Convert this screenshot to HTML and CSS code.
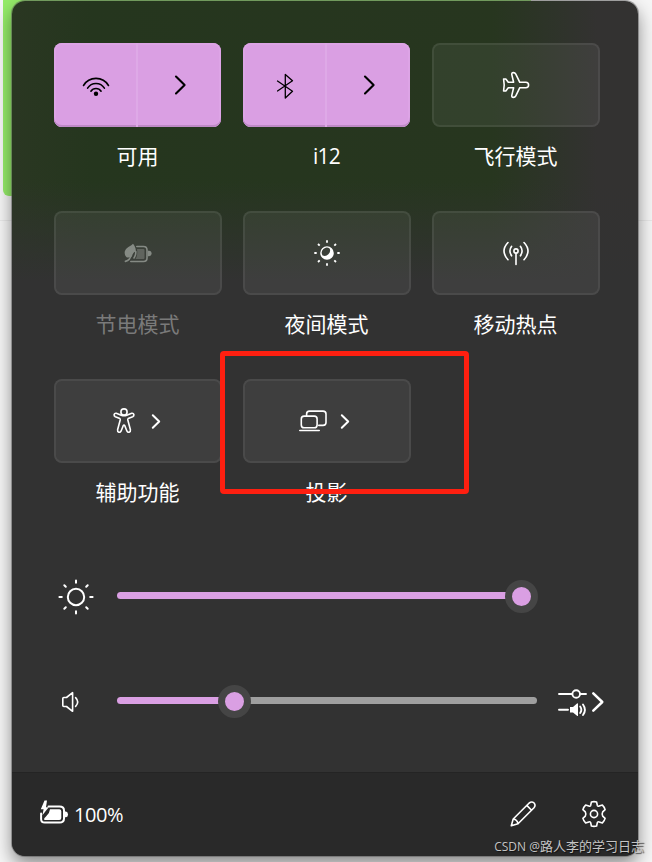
FILE: index.html
```
<!DOCTYPE html>
<html lang="zh-CN">
  <head>
    <meta charset="UTF-8" />
    <meta name="viewport" content="width=device-width, initial-scale=1.0" />
    <title>快速设置</title>
    <link rel="stylesheet" href="styles.css">
  </head>

  <body>
    <!-- 面板后面的聊天窗口 -->
    <div class="bubble"></div>
    <div class="divider"></div>

    <div class="panel">
      <div class="tiles">
        <div class="item">
          <div class="tile on">
            <div class="half">
              <svg class="icon" viewBox="0 0 28 28">
                <path d="M1.5 14.5A14.5 14.5 0 0 1 26.5 14.5M5.6 17.2A9.8 9.8 0 0 1 22.4 17.2M8.9 20.2A6.1 6.1 0 0 1 19.1 20.2" />
                <circle class="fill" cx="14" cy="22.8" r="2.2" />
              </svg>
            </div>
            <div class="half">
              <svg class="icon bold" viewBox="0 0 28 28"><path d="M10 5.5L18.6 14L10 22.5" /></svg>
            </div>
          </div>
          <div class="label">可用</div>
        </div>
        <div class="item">
          <div class="tile on">
            <div class="half">
              <svg class="icon thin" viewBox="0 0 28 28">
                <path d="M6.5 10L21.5 20.3L14.3 27V3.4L21.5 9.8L6.5 20" />
              </svg>
            </div>
            <div class="half">
              <svg class="icon bold" viewBox="0 0 28 28"><path d="M10 5.5L18.6 14L10 22.5" /></svg>
            </div>
          </div>
          <div class="label latin">i12</div>
        </div>
        <div class="item">
          <div class="tile">
            <svg class="icon" viewBox="0 0 28 28">
              <path d="M1.6 8H3.8L6.3 11.3H11.6L9.8 3.6Q9.6 1.6 11.4 1.6Q13 1.6 13.8 3.2L17.8 11.3H23.8Q26.6 11.4 26.6 14Q26.6 16.6 23.8 16.7H17.8L13.8 24.8Q13 26.4 11.4 26.4Q9.6 26.4 9.8 24.4L11.6 16.7H6.3L3.8 20H1.6L2.2 14Z" />
            </svg>
          </div>
          <div class="label">飞行模式</div>
        </div>

        <div class="item disabled">
          <div class="tile">
            <svg class="icon" viewBox="0 0 28 28">
              <path class="fill" d="M9 4.8C10.5 6.5 12.2 9.5 11.8 12.6C9.5 13.2 8.8 15 7.8 17.5C5.5 18.5 3.3 18.8 2.6 18.2C-0.3 15.5 0.2 11.5 2.8 9.2C4.8 7.5 7.5 6.8 9 4.8Z" />
              <path d="M7.6 12.5C7.4 17 5.6 21.5 1.4 22.4M12.8 7.5H19.5Q23 7.5 23 11V19Q23 22.5 19.5 22.5H6.8M11.8 12.5Q12 16 10 19" />
              <path class="fill dim" d="M13 10H19.5Q20.5 10 20.5 11V19Q20.5 20 19.5 20H11.5Q14 16 13 10Z" />
              <path class="fill" d="M23.8 11.8H25Q27.6 12 27.6 14.6Q27.6 17 25 17.2H23.8Z" />
            </svg>
          </div>
          <div class="label">节电模式</div>
        </div>
        <div class="item">
          <div class="tile">
            <svg class="icon" viewBox="0 0 28 28">
              <path class="fill" fill-rule="evenodd" d="M14 7.2A6.8 6.8 0 1 1 14 20.8A6.8 6.8 0 1 1 14 7.2ZM16.8 9.7A5 5 0 0 0 9.6 16.4A5.4 5.4 0 0 0 16.8 9.7Z" />
              <path class="rays" d="M14 1.3V3.7M14 24.3V26.7M1.3 14H3.7M24.3 14H26.7M5 5L6.7 6.7M21.3 21.3L23 23M5 23L6.7 21.3M21.3 6.7L23 5" />
            </svg>
          </div>
          <div class="label">夜间模式</div>
        </div>
        <div class="item">
          <div class="tile">
            <svg class="icon" viewBox="0 0 28 28">
              <circle cx="14" cy="12" r="2.1" />
              <path d="M14 14.2V25.4M9.6 7.3Q6.2 12 9.6 16.8M18.4 7.3Q21.8 12 18.4 16.8M6 3.5Q-2 12 6 20.7M22 3.5Q30 12 22 20.7" />
            </svg>
          </div>
          <div class="label">移动热点</div>
        </div>

        <div class="item">
          <div class="tile more">
            <svg class="icon" viewBox="0 0 28 28">
              <circle cx="14" cy="5" r="3.1" />
              <path d="M11.2 8.2L6.3 6.3Q4.6 6 4.1 7.4Q3.8 9 5.3 9.7L9.8 11.5Q10.4 12 10.2 13L7.6 22.8Q7.3 24.7 8.8 25.2Q10.3 25.6 11 24.2L13.2 18.7Q14 17.2 14.8 18.7L17 24.2Q17.7 25.6 19.2 25.2Q20.7 24.7 20.4 22.8L17.8 13Q17.6 12 18.2 11.5L22.7 9.7Q24.2 9 23.9 7.4Q23.4 6 21.7 6.3L16.8 8.2Q14 9.2 11.2 8.2Z" />
            </svg>
            <svg class="arrow" viewBox="0 0 20 28"><path d="M6.8 8.2L13.2 14.5L6.8 20.8" /></svg>
          </div>
          <div class="label">辅助功能</div>
        </div>
        <div class="item">
          <div class="tile more">
            <svg class="icon" viewBox="0 0 28 28">
              <path d="M7.6 8.5V7Q7.6 4.1 10.5 4.1H24Q27 4.1 27 7V15.5Q27 18.4 24 18.4H19.8" />
              <rect x="2.3" y="9.1" width="15.8" height="11.6" rx="2.8" />
              <path d="M0.8 23.5H20.2" />
            </svg>
            <svg class="arrow" viewBox="0 0 20 28"><path d="M6.8 8.2L13.2 14.5L6.8 20.8" /></svg>
          </div>
          <div class="label">投影</div>
          <!-- 红色标注框 -->
          <div class="mark"></div>
        </div>
      </div>

      <div class="slider">
        <svg class="sun" viewBox="0 0 38 38">
          <circle cx="19" cy="19" r="8.2" />
          <path d="M19 2.4V4.8M19 33.2V35.6M2.4 19H4.8M33.2 19H35.6M7.3 7.3L8.8 8.8M29.2 29.2L30.7 30.7M7.3 30.7L8.8 29.2M29.2 8.8L30.7 7.3" />
        </svg>
        <div class="track">
          <div class="value" style="width: 389px"></div>
          <div class="thumb" style="left: 404px"></div>
        </div>
      </div>
      <div class="slider">
        <svg class="speaker" viewBox="0 0 28 28">
          <path d="M6.8 9.5H9.5L15.6 4.7V23.3L9.5 18.5H6.8Q5.8 18.5 5.8 17.5V10.5Q5.8 9.5 6.8 9.5ZM18.6 9.6Q22.8 14 18.6 18.4" />
        </svg>
        <div class="track">
          <div class="value" style="width: 102px"></div>
          <div class="rest" style="left: 132px"></div>
          <div class="thumb" style="left: 117px"></div>
        </div>
        <svg class="mixer" viewBox="0 0 50 32">
          <path d="M2 8H15M23 8H29M2 23.8H11" />
          <circle cx="19.2" cy="8" r="3.8" />
          <path class="fill" d="M13 21H16L20.3 17.2Q21 17 21 18V29.5Q21 30.4 20.3 30L16 26.5H13Z" />
          <path d="M23.2 20.5Q25.5 23.8 23.2 27M26 18.5Q29.8 23.8 26 29" />
          <path class="wide" d="M36.3 7.3L45.3 16L36.3 24.7" />
        </svg>
      </div>

      <div class="footer">
        <svg class="battery" viewBox="0 0 30 28">
          <path d="M9.5 7.5H20.5Q25 7.5 25 11.5V19.5Q25 23.6 20.5 23.6H5.8Q2.1 23.6 2.1 20V14.5" />
          <path class="fill" d="M11 10.2H20.3Q22.3 10.2 22.3 12.2V19Q22.3 21 20.3 21H6Q5 21 5 20Q5.5 18.5 7 17.5Q10.8 14 11 10.2Z" />
          <path class="fill" d="M5.5 1.5L1.8 10.2H4.6L3.4 16.2L9.7 8.2H7L8 1.5Z" />
          <path class="fill" d="M25.5 12.5H27Q29 13 29 15.5Q29 18 27 18.3H25.5Z" />
        </svg>
        <span class="percent">100%</span>
        <svg class="icon edit" viewBox="0 0 28 28">
          <path d="M2.3 25.8L4.2 19L20.2 3Q22.8 1 25.1 3Q27 5.3 25 7.8L9 23.8ZM17.8 5.4L22.6 10.2M4.2 19Q8.3 19.5 9 23.8" />
        </svg>
        <svg class="icon" viewBox="0 0 28 28">
          <circle cx="14" cy="14" r="3.6" />
          <path d="M11.4 2Q14 1.3 16.6 2L17.3 5.2Q17.7 6.6 19.2 6.1L22.4 5.1Q24.4 7 25.1 9.6L22.7 11.9Q21.6 14 22.7 16.1L25.1 18.4Q24.4 21 22.4 22.9L19.2 21.9Q17.7 21.4 17.3 22.8L16.6 26Q14 26.7 11.4 26L10.7 22.8Q10.3 21.4 8.8 21.9L5.6 22.9Q3.6 21 2.9 18.4L5.3 16.1Q6.4 14 5.3 11.9L2.9 9.6Q3.6 7 5.6 5.1L8.8 6.1Q10.3 6.6 10.7 5.2Z" />
        </svg>
      </div>
    </div>

    <div class="watermark"><span>CSDN @</span>路人李的学习日志</div>
  </body>
</html>
```

FILE: styles.css
```
* {
  margin: 0;
  padding: 0;
  box-sizing: border-box;
}
body {
  position: relative;
  width: 652px;
  height: 862px;
  padding: 1px 14px 6px 12px;
  overflow: hidden;
  background: #f6f6f6;
  font-family: "Open Sans", "Noto Sans CJK SC", sans-serif;
  color: #fff;
}
.bubble {
  position: absolute;
  left: 3px;
  top: 0;
  width: 528px;
  height: 196px;
  border-radius: 0 0 6px 6px;
  background: #95ec69;
}
.divider {
  position: absolute;
  left: 0;
  top: 220px;
  width: 652px;
  height: 1px;
  background: #e9e9e9;
}
.panel {
  position: relative;
  display: flex;
  flex-direction: column;
  width: 626px;
  height: 855px;
  padding-top: 42px;
  border-radius: 13px;
  overflow: hidden;
  /* 背景透出来的绿色 */
  background: linear-gradient(to bottom, rgba(50, 50, 50, 0) 180px, #323232 280px),
    linear-gradient(to right, #2a3722, #25361e 80px, #27361f 480px, #333231 585px);
  box-shadow: 0 0 0 1px rgba(90, 90, 90, 0.5), 0 8px 18px rgba(0, 0, 0, 0.46);
}
svg {
  flex: none;
  fill: none;
  stroke: currentColor;
  stroke-width: 1.6;
  stroke-linecap: round;
  stroke-linejoin: round;
}
.fill {
  fill: currentColor;
  stroke: none;
}
.icon {
  width: 28px;
  height: 28px;
}
.bold {
  stroke-width: 2.1;
}
.thin {
  stroke-width: 1.3;
}
.rays {
  stroke-linecap: butt;
  stroke-width: 1.8;
}

/* 开关按钮 */
.tiles {
  display: grid;
  grid-template-columns: repeat(3, 168px);
  grid-auto-rows: 165px;
  gap: 3px 21px;
  padding-left: 42px;
}
.item {
  position: relative;
}
.tile {
  display: flex;
  justify-content: center;
  align-items: center;
  height: 84px;
  border: 2px solid rgba(255, 255, 255, 0.12);
  border-radius: 8px;
  background: rgba(255, 255, 255, 0.06);
  background-clip: padding-box;
}
.tile.on {
  width: 167px;
  border: 0;
  background: #da9fe3;
  color: #000;
  box-shadow: inset 0 -2px #be89c6, inset 0 0 0 2px #dda4e6;
  overflow: hidden;
}
.half {
  display: flex;
  justify-content: center;
  align-items: center;
  width: 83px;
  height: 100%;
}
.half:first-child {
  width: 84px;
  padding-left: 2px;
  border-right: 2px solid #dea9e7;
}
.more {
  gap: 8px;
}
.arrow {
  width: 20px;
  height: 28px;
  stroke-width: 2;
}
.label {
  margin: 13px 1px 0 0;
  font-size: 21px;
  line-height: 32px;
  text-align: center;
}
.latin {
  letter-spacing: -0.8px;
}
.disabled .icon {
  color: #858a84;
}
.disabled .dim {
  opacity: 0.5;
}
.disabled .label {
  color: #7a7a7a;
}
.mark {
  position: absolute;
  left: -23px;
  top: -28px;
  width: 249px;
  height: 143px;
  border: 5px solid #fe1f10;
  border-radius: 4px;
}

/* 亮度和音量 */
.slider {
  position: relative;
  display: flex;
  align-items: center;
  height: 105px;
  margin-top: -1px;
  padding-left: 45px;
}
.slider + .slider {
  margin-top: 0;
}
.sun {
  width: 38px;
  height: 38px;
  margin: 2px 22px 0 0;
  stroke-width: 2;
}
.speaker {
  width: 28px;
  height: 28px;
  margin: 2px 32px 0 0;
}
.track {
  position: relative;
  width: 420px;
  height: 7px;
  margin-top: -1px;
}
.value {
  height: 7px;
  border-radius: 4px 0 0 4px;
  background: #da9fe3;
}
.rest {
  position: absolute;
  top: 0;
  right: 0;
  height: 7px;
  border-radius: 0 4px 4px 0;
  background: #9f9f9f;
}
.thumb {
  position: absolute;
  top: -12px;
  width: 33px;
  height: 33px;
  margin-left: -16px;
  border: 7.5px solid #454545;
  border-radius: 50%;
  background: #da9fe3;
}
.mixer {
  width: 50px;
  height: 32px;
  margin: 2px 0 0 20px;
  stroke-width: 1.9;
}
.wide {
  stroke-width: 2.5;
}

.footer {
  display: flex;
  align-items: center;
  height: 84px;
  margin-top: auto;
  padding: 0 30px 2px 27px;
  border-top: 1px solid #242424;
  background: #292929;
}
.battery {
  width: 30px;
  height: 28px;
  margin: -1px 5px 0 0;
  stroke-width: 2;
}
.percent {
  margin-top: 2px;
  font-size: 20px;
  letter-spacing: -0.4px;
}
.edit {
  margin: 0 43px 0 auto;
}

.watermark {
  position: absolute;
  right: 8px;
  bottom: 5px;
  font-size: 13px;
  line-height: 20px;
  white-space: nowrap;
  color: #c4c4c4;
  text-shadow: 1px 1px 1px rgba(0, 0, 0, 0.6);
}
.watermark span {
  font-size: 12px;
}
```
